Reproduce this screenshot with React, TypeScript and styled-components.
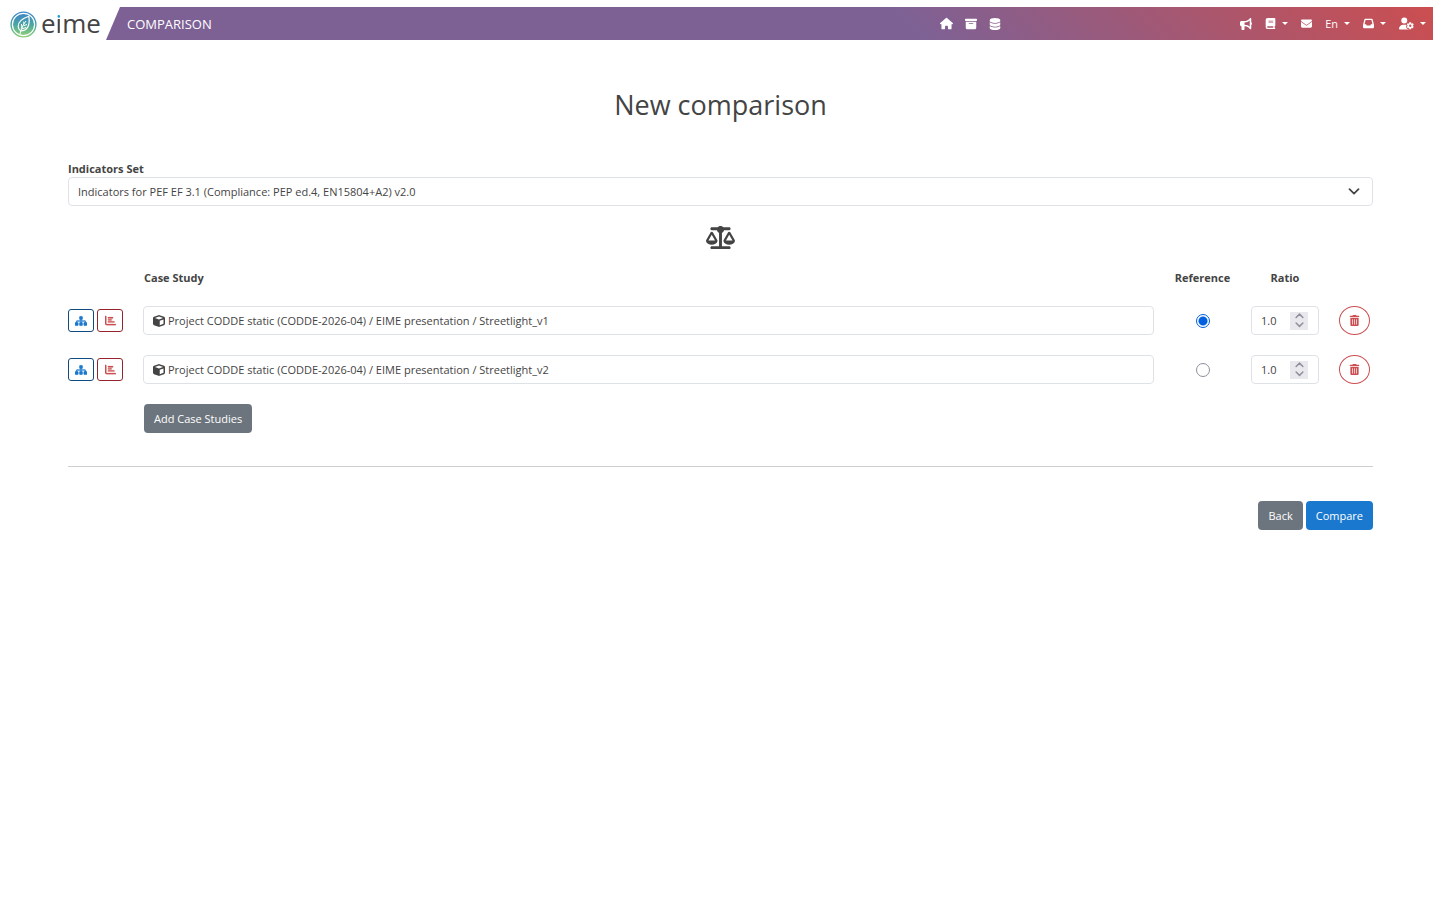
import React, { useState } from "react";
import styled, { createGlobalStyle } from "styled-components";
import {
  FaHouse, FaBoxArchive, FaDatabase, FaBullhorn, FaBook, FaEnvelope, FaInbox,
  FaUserGear, FaScaleBalanced, FaSitemap, FaChartBar, FaCube, FaTrashCan,
} from "react-icons/fa6";

const GlobalStyle = createGlobalStyle`
  *, *::before, *::after { box-sizing: border-box; }
  body {
    margin: 0;
    background: #fff;
    color: #444;
    font-family: "Segoe UI", "Open Sans", "Noto Sans", sans-serif;
    font-size: 11px;
    line-height: 17px;
  }
  button, input, select { font: inherit; color: inherit; margin: 0; }
  svg { display: block; flex: none; }
`;

const Header = styled.header`
  display: flex;
  align-items: flex-start;
  padding: 7px 7px 0 10px;
`;

const Brand = styled.a`
  display: flex;
  align-items: center;
  gap: 4px;
  width: 96px;
  height: 33px;
  color: #444;
  text-decoration: none;
`;

const BrandName = styled.span`
  font-size: 26px;
  line-height: 30px;
  height: 32px;
`;

const BrandAccent = styled.span`
  color: transparent;
  background: linear-gradient(#18a0d0 13px, #444 13px);
  background-clip: text;
  -webkit-background-clip: text;
`;

const Bar = styled.div`
  flex: 1;
  display: grid;
  grid-template-columns: 1.91fr auto 1fr;
  align-items: center;
  height: 33px;
  padding: 0 7px 0 21px;
  color: #fff;
  background: linear-gradient(45deg, #7d6195 60%, #cb4e50 100%);
  clip-path: polygon(14px 0, 100% 0, 100% 100%, 0 100%);
`;

const PageName = styled.span`
  font-size: 13px;
  line-height: 18px;
`;

const Nav = styled.nav<{ $gap: number }>`
  display: flex;
  align-items: center;
  justify-content: flex-end;
  gap: ${(p) => p.$gap}px;
`;

const NavLink = styled.a`
  display: flex;
  color: #fff;
`;

const NavButton = styled.button`
  display: flex;
  align-items: center;
  gap: 6px;
  padding: 0;
  border: 0;
  background: none;
  color: #fff;
  &::after {
    content: "";
    border: 3px solid transparent;
    border-top-color: #fff;
    border-bottom: 0;
  }
`;

const Main = styled.main`
  padding: 45px 67px 0 68px;
`;

const Title = styled.h1`
  margin: 0;
  text-align: center;
  font-size: 27px;
  font-weight: 400;
  line-height: 40px;
`;

const Field = styled.div`
  display: flex;
  flex-direction: column;
  margin-top: 35px;
`;

const Label = styled.label`
  font-weight: 700;
`;

const SelectBox = styled.div`
  display: grid;
  align-items: center;
  > * { grid-area: 1 / 1; }
  > svg { justify-self: end; margin-right: 13px; pointer-events: none; }
`;

const Select = styled.select`
  appearance: none;
  width: 100%;
  height: 29px;
  padding: 0 32px 0 9px;
  border: 1px solid #dee2e6;
  border-radius: 4px;
  background: #fff;
`;

const ScaleMark = styled.div`
  display: flex;
  justify-content: center;
  margin-top: 17px;
`;

const Table = styled.table`
  width: 100%;
  margin-top: 7px;
  border-collapse: collapse;
  table-layout: fixed;
`;

const Col = styled.col<{ $width?: number }>`
  width: ${(p) => (p.$width ? p.$width + "px" : "auto")};
`;

const Th = styled.th<{ $align?: string }>`
  height: 37px;
  padding: 0 1px;
  text-align: ${(p) => p.$align ?? "left"};
  font-weight: 700;
`;

const Td = styled.td`
  height: 49px;
  padding: 0;
  vertical-align: middle;
`;

const Actions = styled.div`
  display: flex;
  gap: 3px;
`;

const IconButton = styled.button<{ $border: string; $color: string }>`
  display: flex;
  align-items: center;
  justify-content: center;
  width: 26px;
  height: 23px;
  padding: 0;
  border: 1px solid ${(p) => p.$border};
  border-radius: 3px;
  background: #fff;
  color: ${(p) => p.$color};
`;

const StudyField = styled.div`
  display: flex;
  align-items: center;
  gap: 3px;
  height: 29px;
  padding: 0 9px;
  border: 1px solid #dee2e6;
  border-radius: 4px;
`;

const Radio = styled.input`
  appearance: none;
  display: block;
  width: 14px;
  height: 14px;
  margin: 0 auto;
  border: 1px solid #8f8f9d;
  border-radius: 50%;
  background: #fff;
  &:checked {
    border-color: #0060df;
    background: radial-gradient(circle, #0060df 4px, #fff 5px);
  }
`;

const RatioBox = styled.div`
  display: flex;
  align-items: center;
  height: 29px;
  padding: 0 10px 0 9px;
  border: 1px solid #dee2e6;
  border-radius: 4px;
`;

const RatioInput = styled.input`
  flex: 1;
  min-width: 0;
  padding: 0;
  border: 0;
  background: none;
  appearance: textfield;
  &::-webkit-inner-spin-button { appearance: none; margin: 0; }
`;

const Spinner = styled.div`
  display: flex;
  flex-direction: column;
  width: 18px;
  height: 18px;
  background: #e9e9ed;
`;

const SpinButton = styled.button`
  display: flex;
  align-items: center;
  justify-content: center;
  height: 9px;
  padding: 0;
  border: 0;
  background: none;
  color: #8f8f9d;
`;

const DeleteButton = styled.button`
  display: flex;
  align-items: center;
  justify-content: center;
  width: 31px;
  height: 29px;
  margin-left: 20px;
  padding: 0;
  border: 1px solid #cb4e50;
  border-radius: 50%;
  background: #fff;
  color: #cb4e50;
`;

const Button = styled.button<{ $primary?: boolean }>`
  height: 29px;
  padding: 0 10px;
  border: 0;
  border-radius: 4px;
  background: ${(p) => (p.$primary ? "#1a79ce" : "#6c757d")};
  color: #fff;
`;

const AddRow = styled.div`
  margin: 10px 0 0 76px;
`;

const Divider = styled.hr`
  margin: 33px 0 34px;
  border: 0;
  border-top: 1px solid #cfcfcf;
`;

const Footer = styled.div`
  display: flex;
  justify-content: flex-end;
  gap: 3px;
`;

function LeafLogo() {
  return (
    <svg width="27" height="28" viewBox="0 0 27 28" aria-hidden="true">
      <defs>
        <linearGradient id="leaf" x1="0" y1="0" x2="0" y2="1">
          <stop offset="0" stopColor="#3f86c6" />
          <stop offset="0.5" stopColor="#4ba6a4" />
          <stop offset="1" stopColor="#8ccb78" />
        </linearGradient>
      </defs>
      <circle cx="13.5" cy="14.500" r="12.4" fill="none" stroke="url(#leaf)" strokeWidth="1.4" />
      <circle cx="13.5" cy="14.500" r="10.5" fill="url(#leaf)" />
      <path d="M18.8 6.200C12 8.500 8 11.500 8.200 16.500c.1 2 1 3.500 2.400 4.400C17 21 20.500 15.500 18.800 6.200Z" fill="none" stroke="#fff" strokeWidth="1.200" />
      <path d="M10 24C10.800 19.500 13 14.500 16 11M12 18l-.6-4M11.500 19l4.500-1.500M14 14.200l-.3-2.500M13.500 15.800l3.500-1.300" fill="none" stroke="#fff" strokeWidth="1" />
    </svg>
  );
}

function Chevron({ width = 12, up = false, stroke = 1.7 }) {
  return (
    <svg width={width} height={width / 2 + 1} viewBox="0 0 12 7" fill="none" stroke="currentColor" strokeWidth={stroke} strokeLinecap="round" strokeLinejoin="round" aria-hidden="true">
      <path d={up ? "M1.500 5.800 6 1.300l4.500 4.500" : "M1.500 1.200 6 5.700l4.500-4.500"} />
    </svg>
  );
}

const studies = [
  "Project CODDE static (CODDE-2026-04) / EIME presentation / Streetlight_v1",
  "Project CODDE static (CODDE-2026-04) / EIME presentation / Streetlight_v2",
];

function StudyRow({ name, checked, onCheck }: { name: string; checked: boolean; onCheck: () => void }) {
  const [ratio, setRatio] = useState("1.0");
  const step = (by: number) => setRatio((Number(ratio) + by).toFixed(1));
  return (
    <tr>
      <Td>
        <Actions>
          <IconButton type="button" $border="#0f4a80" $color="#1a79ce" aria-label="Tree"><FaSitemap size={12} stroke="currentColor" strokeWidth={12} /></IconButton>
          <IconButton type="button" $border="#96242c" $color="#cb4e50" aria-label="Chart"><FaChartBar size={11} stroke="currentColor" strokeWidth={8} /></IconButton>
        </Actions>
      </Td>
      <Td><StudyField><FaCube size={12} />{name}</StudyField></Td>
      <Td><Radio type="radio" name="reference" aria-label="Reference" checked={checked} onChange={onCheck} /></Td>
      <Td>
        <RatioBox>
          <RatioInput type="number" step="0.1" aria-label="Ratio" value={ratio} onChange={(e) => setRatio(e.target.value)} />
          <Spinner>
            <SpinButton type="button" aria-label="Increase" onClick={() => step(0.1)}><Chevron width={9} stroke={2} up /></SpinButton>
            <SpinButton type="button" aria-label="Decrease" onClick={() => step(-0.1)}><Chevron width={9} stroke={2} /></SpinButton>
          </Spinner>
        </RatioBox>
      </Td>
      <Td><DeleteButton type="button" aria-label="Delete"><FaTrashCan size={11} /></DeleteButton></Td>
    </tr>
  );
}

export default function App() {
  const [reference, setReference] = useState(0);
  return (
    <>
      <GlobalStyle />
      <Header>
        <Brand href="#"><LeafLogo /><BrandName>e<BrandAccent>i</BrandAccent>me</BrandName></Brand>
        <Bar>
          <PageName>COMPARISON</PageName>
          <Nav $gap={12}>
            <NavLink href="#" aria-label="Home"><FaHouse size={13} /></NavLink>
            <NavLink href="#" aria-label="Archive"><FaBoxArchive size={12} /></NavLink>
            <NavLink href="#" aria-label="Database"><FaDatabase size={12} /></NavLink>
          </Nav>
          <Nav $gap={13}>
            <NavLink href="#" aria-label="News"><FaBullhorn size={12} /></NavLink>
            <NavButton type="button" aria-label="Documentation"><FaBook size={11} /></NavButton>
            <NavLink href="#" aria-label="Messages"><FaEnvelope size={11} /></NavLink>
            <NavButton type="button">En</NavButton>
            <NavButton type="button" aria-label="Inbox"><FaInbox size={11} /></NavButton>
            <NavButton type="button" aria-label="Account"><FaUserGear size={15} /></NavButton>
          </Nav>
        </Bar>
      </Header>
      <Main>
        <Title>New comparison</Title>
        <Field>
          <Label htmlFor="indicators">Indicators Set</Label>
          <SelectBox>
            <Select id="indicators">
              <option>Indicators for PEF EF 3.1 (Compliance: PEP ed.4, EN15804+A2) v2.0</option>
            </Select>
            <Chevron />
          </SelectBox>
        </Field>
        <ScaleMark><FaScaleBalanced size={29} /></ScaleMark>
        <Table>
          <colgroup>
            <Col $width={75} /><Col /><Col $width={97} /><Col $width={68} /><Col $width={54} />
          </colgroup>
          <thead>
            <tr>
              <Th />
              <Th>Case Study</Th>
              <Th $align="center">Reference</Th>
              <Th $align="center">Ratio</Th>
              <Th />
            </tr>
          </thead>
          <tbody>
            {studies.map((name, i) => (
              <StudyRow key={name} name={name} checked={reference === i} onCheck={() => setReference(i)} />
            ))}
          </tbody>
        </Table>
        <AddRow><Button type="button">Add Case Studies</Button></AddRow>
        <Divider />
        <Footer>
          <Button type="button">Back</Button>
          <Button type="button" $primary>Compare</Button>
        </Footer>
      </Main>
    </>
  );
}
